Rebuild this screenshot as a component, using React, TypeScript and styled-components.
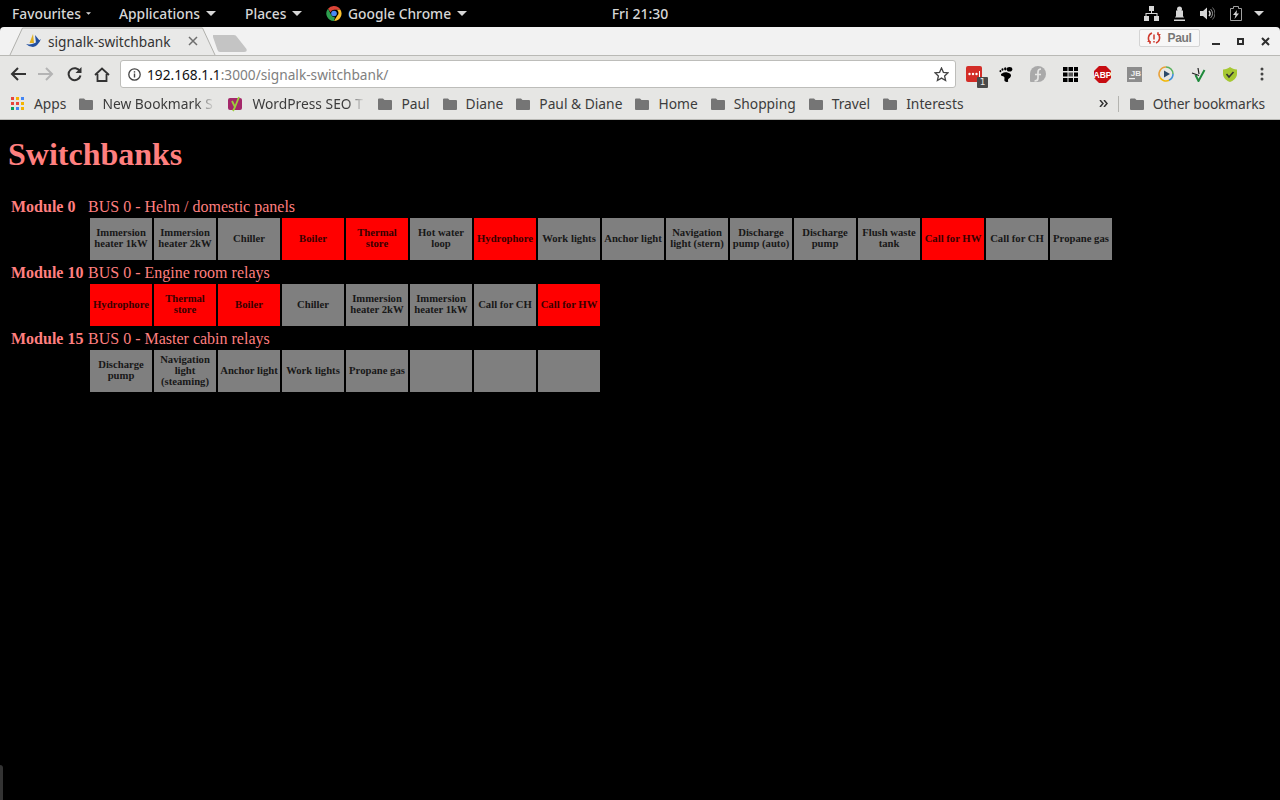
import styled, { createGlobalStyle } from 'styled-components';
import { ReactNode } from 'react';

const GlobalStyle = createGlobalStyle`
    html, body {
        margin: 0;
        padding: 0;
        height: 100%;
        background: #000;
    }
`;

const Screen = styled.div`
    position: relative;
    width: 1280px;
    height: 800px;
    overflow: hidden;
    background: #000;
    display: flex;
    flex-direction: column;
`;

/* gnome top bar */
const TopBar = styled.div`
    height: 27px;
    flex: none;
    display: grid;
    grid-template-columns: 1fr auto 1fr;
    align-items: center;
    background: #000;
    color: #d6d6d6;
    font: 500 13.8px "Noto Sans", sans-serif;
`;

const TopLeft = styled.div`
    display: flex;
    align-items: center;
    padding-left: 12px;
`;

const TopItem = styled.span<{ $w: number; $gap?: number }>`
    display: flex;
    align-items: center;
    gap: ${p => p.$gap ?? 6}px;
    width: ${p => p.$w}px;
    white-space: nowrap;
`;

const Clock = styled.span`
    font-size: 14px;
`;

const TopRight = styled.div`
    display: flex;
    align-items: center;
    justify-content: flex-end;
    gap: 15px;
    padding-right: 16px;
`;

const TrayCaret = styled.span`
    display: flex;
    margin-left: -3px;
`;

const Caret = ({ small }: { small?: boolean }) => (
    <svg width={small ? 5 : 10} height={small ? 3 : 5} viewBox="0 0 10 5">
        <path d="M0 0h10L5 5z" fill="#d6d6d6" />
    </svg>
);

const ChromeLogo = () => (
    <svg width="16" height="15" viewBox="0 0 16 15">
        <g transform="translate(0.5 0)">
            <path d="M7.5 0a7.5 7.5 0 0 1 6.5 3.750H7.500a3.750 3.750 0 0 0-3.500 2.600L1.500 2.800A7.500 7.500 0 0 1 7.500 0z" fill="#db4437" />
            <path d="M14 3.750a7.500 7.500 0 0 1-6.500 11.250l3.200-5.250a3.750 3.750 0 0 0-.4-6z" fill="#fbc02d" />
            <path d="M1.500 2.800l3.100 6a3.750 3.750 0 0 0 3.800 2.400L7.500 15A7.500 7.500 0 0 1 1.500 2.800z" fill="#2e9e4f" />
            <circle cx="7.500" cy="7.500" r="2.800" fill="#4a8af4" />
        </g>
    </svg>
);

const NetworkIcon = () => (
    <svg width="15" height="15" viewBox="0 0 15 15" fill="#d6d6d6">
        <rect x="5" y="0" width="5" height="5" />
        <rect x="0" y="10" width="5" height="5" />
        <rect x="10" y="10" width="5" height="5" />
        <path d="M7 5h1v2h5.500v3h-1V8h-10v2h-1V7H7z" />
    </svg>
);

const LockIcon = () => (
    <svg width="11" height="15" viewBox="0 0 11 15" fill="#d6d6d6">
        <circle cx="5.500" cy="3" r="2.500" />
        <path d="M2 4.500h7V10l1 1.500H1L2 10z" />
        <rect x="0" y="13.500" width="11" height="1.500" />
    </svg>
);

const VolumeIcon = () => (
    <svg width="15" height="15" viewBox="0 0 15 15" fill="none" stroke="#d6d6d6">
        <path d="M0 5h3l4-3.500v12L3 10H0z" fill="#d6d6d6" stroke="none" />
        <path d="M9 5a3.500 3.500 0 0 1 0 5" strokeWidth="1.500" />
        <path d="M10.500 3a6 6 0 0 1 0 9" opacity=".7" />
        <path d="M12.500 1.500a8.500 8.500 0 0 1 0 12" opacity=".5" />
    </svg>
);

const BatteryIcon = () => (
    <svg width="12" height="15" viewBox="0 0 12 15">
        <path d="M3.500.5h5v2h3v12H.5v-12h3z" fill="none" stroke="#a0a0a0" />
        <path d="M7 4L3 9h2.500L4.500 13 9 7.500H6.500z" fill="#d6d6d6" />
    </svg>
);

/* window frame */
const TabStrip = styled.div`
    position: relative;
    height: 28px;
    flex: none;
    display: flex;
    align-items: center;
    background: #f2f2f2;
    border-radius: 4px 4px 0 0;
    border-bottom: 1px solid #b9b9b5;
`;

const TabShape = styled.svg`
    position: absolute;
    left: 8px;
    top: 0;
`;

const ActiveTab = styled.div`
    position: relative;
    display: flex;
    align-items: center;
    width: 172px;
    margin-left: 26px;
    font: 13.7px "Noto Sans", sans-serif;
    color: #333;
`;

const TabTitle = styled.span`
    margin-left: 7px;
    flex: 1;
    white-space: nowrap;
`;

const ProfileChip = styled.div`
    position: absolute;
    left: 1139px;
    top: 2px;
    width: 59px;
    height: 16px;
    display: flex;
    align-items: center;
    justify-content: center;
    gap: 6px;
    border: 1px solid #d4d4d4;
    border-radius: 2px;
    background: #f7f7f7;
    color: #777;
    font: bold 12px "Liberation Sans", sans-serif;
    letter-spacing: -0.3px;
`;

const WindowControls = styled.div`
    position: absolute;
    left: 1203px;
    top: 5px;
    display: flex;
`;

const WindowButton = styled.span`
    width: 25px;
    height: 18px;
    display: flex;
    align-items: center;
    justify-content: center;
`;

const Toolbar = styled.div`
    height: 36px;
    flex: none;
    display: flex;
    align-items: center;
    background: #e6e6e4;
    padding-left: 4px;
    box-sizing: border-box;
`;

const NavButton = styled.span`
    flex: none;
    width: 28px;
    height: 28px;
    display: flex;
    align-items: center;
    justify-content: center;
`;

const AddressBar = styled.div`
    flex: none;
    width: 836px;
    height: 28px;
    margin-left: 4px;
    box-sizing: border-box;
    display: flex;
    align-items: center;
    padding: 0 6px 0 7px;
    background: #fff;
    border: 1px solid #bdbdba;
    border-radius: 3px;
    font: 13.7px "Noto Sans", sans-serif;
    color: #111;
`;

const Url = styled.span`
    flex: 1;
    margin-left: 6px;
    white-space: nowrap;
`;

const UrlRest = styled.span`
    color: #808080;
`;

const Extensions = styled.div`
    display: flex;
    align-items: center;
    margin-left: 2px;
`;

const ExtSlot = styled.span`
    position: relative;
    flex: none;
    width: 32px;
    height: 24px;
    display: flex;
    align-items: center;
    justify-content: center;
`;

const ExtBadge = styled.span`
    position: absolute;
    left: 19px;
    top: 15px;
    width: 11px;
    height: 11px;
    background: #4a4a4a;
    color: #e8e8e8;
    border-radius: 1px;
    font: 9px/11px "DejaVu Sans", sans-serif;
    text-align: center;
`;

const BookmarkBar = styled.div`
    height: 28px;
    flex: none;
    box-sizing: border-box;
    display: flex;
    align-items: center;
    gap: 13px;
    padding: 0 0 4px 11px;
    background: #e6e6e4;
    border-bottom: 1px solid #b9b9b5;
    font: 13.8px "Noto Sans", sans-serif;
    color: #3c3c3c;
`;

const Bookmark = styled.span<{ $gap?: number }>`
    display: flex;
    align-items: center;
    flex: none;
    gap: ${p => p.$gap ?? 9}px;
    white-space: nowrap;
`;

const BookmarkLabel = styled.span<{ $w?: number }>`
    display: block;
    ${p => p.$w && `
        width: ${p.$w}px;
        mask-image: linear-gradient(to right, #000 84%, transparent);
    `}
`;

const BookmarkSpacer = styled.span`
    flex: 1;
`;

const Chevrons = styled.span`
    margin-right: -3px;
    display: flex;
`;

const Separator = styled.span`
    width: 1px;
    height: 16px;
    margin-right: -2px;
    background: #b4b4b0;
`;

const OtherBookmarks = styled(Bookmark)`
    margin-right: 15px;
    letter-spacing: -0.13px;
`;

const Folder = () => (
    <svg width="14" height="12" viewBox="0 0 14 12">
        <path d="M0 1.500A1 1 0 0 1 1 .5h4L6.500 2H13a1 1 0 0 1 1 1v8a1 1 0 0 1-1 1H1a1 1 0 0 1-1-1z" fill="#757575" />
    </svg>
);

const AppsGrid = () => (
    <svg width="13" height="13" viewBox="0 0 13 13">
        {['#e8453c', '#f4b400', '#4285f4', '#e8453c', '#e8453c', '#f4b400', '#0f9d58', '#4285f4', '#f4b400'].map((c, i) => (
            <rect key={i} x={(i % 3) * 5} y={Math.floor(i / 3) * 5} width="3" height="3" fill={c} />
        ))}
    </svg>
);

const YoastIcon = () => (
    <svg width="15" height="16" viewBox="0 0 15 16">
        <rect y="2" width="14" height="12" rx="2" fill="#a4286a" />
        <path d="M4 5l3 6-2 4M11 1L7 11" fill="none" stroke="#9ccf3c" strokeWidth="1.800" />
    </svg>
);

/* page */
const Page = styled.main`
    flex: 1;
    background: #000;
    color: #ff7f7f;
    font-family: "Liberation Serif", serif;
    padding-left: 8px;
`;

const PageTitle = styled.h1`
    margin: 16px 0 25px;
    font-size: 32px;
    line-height: 37px;
    font-weight: bold;
`;

const Modules = styled.div`
    display: flex;
    flex-direction: column;
    gap: 2px;
    padding-left: 3px;
`;

const ModuleHeader = styled.div`
    display: flex;
    height: 18px;
    align-items: center;
    font-size: 16px;
    margin-bottom: 2px;
    white-space: nowrap;
`;

const ModuleName = styled.strong`
    width: 77px;
    flex: none;
`;

const SwitchRow = styled.div`
    display: flex;
    gap: 2px;
    margin-left: 79px;
    margin-bottom: 2px;
`;

const SwitchButton = styled.div<{ $on?: boolean }>`
    width: 62px;
    height: 42px;
    flex: none;
    display: flex;
    align-items: center;
    justify-content: center;
    text-align: center;
    background: ${p => (p.$on ? '#ff0000' : '#7f7f7f')};
    color: ${p => (p.$on ? '#380000' : '#181818')};
    font-size: 10.67px;
    line-height: 11px;
    font-weight: bold;
    padding: 0 1px 2px;
    box-sizing: border-box;
`;

const ResizeEdge = styled.div`
    position: absolute;
    left: 0;
    bottom: 0;
    width: 3px;
    height: 35px;
    background: #333;
    border-radius: 0 3px 0 0;
`;

type Sw = [string, boolean?];

const modules: { name: string; bus: string; switches: Sw[] }[] = [
    {
        name: 'Module 0',
        bus: 'BUS 0 - Helm / domestic panels',
        switches: [
            ['Immersion heater 1kW'], ['Immersion heater 2kW'], ['Chiller'], ['Boiler', true],
            ['Thermal store', true], ['Hot water loop'], ['Hydrophore', true], ['Work lights'],
            ['Anchor light'], ['Navigation light (stern)'], ['Discharge pump (auto)'], ['Discharge pump'],
            ['Flush waste tank'], ['Call for HW', true], ['Call for CH'], ['Propane gas'],
        ],
    },
    {
        name: 'Module 10',
        bus: 'BUS 0 - Engine room relays',
        switches: [
            ['Hydrophore', true], ['Thermal store', true], ['Boiler', true], ['Chiller'],
            ['Immersion heater 2kW'], ['Immersion heater 1kW'], ['Call for CH'], ['Call for HW', true],
        ],
    },
    {
        name: 'Module 15',
        bus: 'BUS 0 - Master cabin relays',
        switches: [
            ['Discharge pump'], ['Navigation light (steaming)'], ['Anchor light'], ['Work lights'],
            ['Propane gas'], [''], [''], [''],
        ],
    },
];

const extensions: { key: string; icon: ReactNode; badge?: string }[] = [
    {
        key: 'lastpass',
        badge: '1',
        icon: (
            <svg width="16" height="16" viewBox="0 0 16 16">
                <rect width="16" height="16" rx="2" fill="#d32d27" />
                <circle cx="3.500" cy="8" r="1.200" fill="#fff" />
                <circle cx="7" cy="8" r="1.200" fill="#fff" />
                <circle cx="10.500" cy="8" r="1.200" fill="#fff" />
                <rect x="13" y="5" width="1" height="6" fill="#fff" />
            </svg>
        ),
    },
    {
        key: 'gnome',
        icon: (
            <svg width="14" height="15" viewBox="0 0 14 15" fill="#000">
                <ellipse cx="10.500" cy="2.300" rx="2.800" ry="2.300" />
                <ellipse cx="6.300" cy="1.800" rx="1.200" ry="1.600" />
                <ellipse cx="3.500" cy="2.500" rx="1" ry="1.300" />
                <ellipse cx="1.400" cy="4.200" rx=".9" ry="1.100" />
                <path d="M3 6.500c2-1.500 4-1.200 6-.8 3 .6 4 3 2 5-1 1-2 1-2 2.300 0 1 .4 1.400 0 1.800s-3 .4-3.500-1 .5-3-.5-4-3-.5-3-1.800 0-1 1-1.500z" />
            </svg>
        ),
    },
    {
        key: 'fedora',
        icon: (
            <svg width="16" height="16" viewBox="0 0 16 16">
                <circle cx="8" cy="8" r="8" fill="#a9a9a9" />
                <path d="M0 8v7a1 1 0 0 0 1 1h7z" fill="#a9a9a9" />
                <path d="M4.500 15c2.500 0 3.500-1 3.500-3V6c0-2 1-3 3-3M5 8.500h6" fill="none" stroke="#e6e6e4" strokeWidth="1.700" />
            </svg>
        ),
    },
    {
        key: 'grid',
        icon: (
            <svg width="15" height="15" viewBox="0 0 15 15">
                {[0, 1, 2, 3, 4, 5, 6, 7, 8].map(i => (
                    <rect key={i} x={(i % 3) * 5.5} y={Math.floor(i / 3) * 5.5} width="4.500" height="4" fill={i === 4 ? '#555' : '#000'} />
                ))}
            </svg>
        ),
    },
    {
        key: 'abp',
        icon: (
            <svg width="17" height="17" viewBox="0 0 17 17">
                <path d="M5 0h7l5 5v7l-5 5H5l-5-5V5z" fill="#c70d12" />
                <text x="8.500" y="11.500" textAnchor="middle" fontFamily="Liberation Sans" fontWeight="bold" fontSize="8.500" fill="#fff">ABP</text>
            </svg>
        ),
    },
    {
        key: 'jb',
        icon: (
            <svg width="15" height="15" viewBox="0 0 15 15">
                <rect width="15" height="15" fill="#8c8c8c" />
                <text x="14" y="8.500" textAnchor="end" fontFamily="Liberation Sans" fontWeight="bold" fontSize="8" fill="#eee">JB</text>
                <rect x="2" y="11" width="6" height="1.200" fill="#eee" />
            </svg>
        ),
    },
    {
        key: 'play',
        icon: (
            <svg width="16" height="16" viewBox="0 0 16 16" fill="none" strokeWidth="1.600">
                <path d="M8 1a7 7 0 0 1 7 7" stroke="#5bb25f" />
                <path d="M15 8a7 7 0 0 1-4 6.300" stroke="#3f8fd8" />
                <path d="M11 14.300A7 7 0 0 1 2 11.500" stroke="#f2b705" />
                <path d="M2 11.500A7 7 0 0 1 8 1" stroke="#e9a13b" />
                <path d="M6 4.500l6 3.500-6 3.500z" fill="#2c4a6b" stroke="none" />
            </svg>
        ),
    },
    {
        key: 'check',
        icon: (
            <svg width="15" height="15" viewBox="0 0 15 15" fill="none">
                <path d="M4.500 8l3 6 6-11" stroke="#1f8a3b" strokeWidth="2" />
                <path d="M1 6l7 2.500M7 1l1 6" stroke="#222" strokeWidth="1.200" />
            </svg>
        ),
    },
    {
        key: 'shield',
        icon: (
            <svg width="16" height="15" viewBox="0 0 16 15">
                <path d="M1 2.500C4 2.500 6 1.500 8 0c2 1.500 4 2.500 7 2.500V7c0 4-4 7-7 8-3-1-7-4-7-8z" fill="#a6c832" />
                <path d="M4.500 7l2.500 3 4.500-5" fill="none" stroke="#333" strokeWidth="1.600" />
            </svg>
        ),
    },
    {
        key: 'menu',
        icon: (
            <svg width="4" height="14" viewBox="0 0 4 14" fill="#444">
                <circle cx="2" cy="2" r="1.500" />
                <circle cx="2" cy="7" r="1.500" />
                <circle cx="2" cy="12" r="1.500" />
            </svg>
        ),
    },
];

const plainBookmarks = ['Paul', 'Diane', 'Paul & Diane', 'Home', 'Shopping', 'Travel', 'Interests'];

export default function App() {
    return (
        <Screen>
            <GlobalStyle />
            <TopBar>
                <TopLeft>
                    <TopItem $w={107} $gap={5}>Favourites <Caret small /></TopItem>
                    <TopItem $w={126}>Applications <Caret /></TopItem>
                    <TopItem $w={81}>Places <Caret /></TopItem>
                    <TopItem $w={150}><ChromeLogo />Google Chrome <Caret /></TopItem>
                </TopLeft>
                <Clock>Fri 21:30</Clock>
                <TopRight>
                    <NetworkIcon />
                    <LockIcon />
                    <VolumeIcon />
                    <BatteryIcon />
                    <TrayCaret><Caret /></TrayCaret>
                </TopRight>
            </TopBar>

            <TabStrip>
                <TabShape width="245" height="28" viewBox="0 0 245 28">
                    <path d="M2 28L14.500 1H194.500L207 28" fill="#e9e9e8" stroke="#b0b0ac" />
                    <path d="M205 8H226Q228 8 229 10L238.500 22Q239.500 25 236 25H212Q210 25 209.500 23L205 10Z" fill="#c4c4c4" />
                </TabShape>
                <ActiveTab>
                    <svg width="15" height="14" viewBox="0 0 15 14">
                        <path d="M7 0L3.500 9H8z" fill="#e0b020" />
                        <path d="M9 1l1 8 4-2z" fill="#2350a0" />
                        <path d="M0 10q7 2 15-5-3 7-8 8-4 0-7-3z" fill="#2350a0" />
                    </svg>
                    <TabTitle>signalk-switchbank</TabTitle>
                    <svg width="10" height="10" viewBox="0 0 10 10">
                        <path d="M1 1l8 8M9 1l-8 8" stroke="#6e6e6e" strokeWidth="1.500" />
                    </svg>
                </ActiveTab>
                <ProfileChip>
                    <svg width="14" height="14" viewBox="0 0 14 14" fill="none" stroke="#cf3a2e" strokeWidth="1.500">
                        <path d="M5 2A5.500 5.500 0 0 0 3.500 11.500M9 12a5.500 5.500 0 0 0 1.500-9.500" />
                        <path d="M3 13V10.500H.5M11 1v2.500h2.500" strokeWidth="1.200" />
                        <path d="M7 3.500v5M7 10v1.500" />
                    </svg>
                    Paul
                </ProfileChip>
                <WindowControls>
                    <WindowButton>
                        <svg width="8" height="8" viewBox="0 0 8 8"><rect y="6" width="8" height="2" fill="#2e2e2e" /></svg>
                    </WindowButton>
                    <WindowButton>
                        <svg width="7" height="7" viewBox="0 0 7 7"><rect x="1" y="1" width="5" height="5" fill="none" stroke="#2e2e2e" strokeWidth="2" /></svg>
                    </WindowButton>
                    <WindowButton>
                        <svg width="9" height="9" viewBox="0 0 9 9"><path d="M1 1l7 7M8 1L1 8" stroke="#2e2e2e" strokeWidth="2" /></svg>
                    </WindowButton>
                </WindowControls>
            </TabStrip>

            <Toolbar>
                <NavButton>
                    <svg width="16" height="14" viewBox="0 0 16 14" fill="none" stroke="#333" strokeWidth="2">
                        <path d="M16 7H2M8 1L2 7l6 6" />
                    </svg>
                </NavButton>
                <NavButton>
                    <svg width="16" height="14" viewBox="0 0 16 14" fill="none" stroke="#b4b4b4" strokeWidth="2">
                        <path d="M0 7h14M8 1l6 6-6 6" />
                    </svg>
                </NavButton>
                <NavButton>
                    <svg width="15" height="15" viewBox="0 0 15 15" fill="none" stroke="#333" strokeWidth="2">
                        <path d="M13 4.500A6 6 0 1 0 13.500 8.500" />
                        <path d="M14.500 0v6h-6z" fill="#333" stroke="none" />
                    </svg>
                </NavButton>
                <NavButton>
                    <svg width="16" height="15" viewBox="0 0 16 15" fill="none" stroke="#333" strokeWidth="1.800">
                        <path d="M1 8l7-6.500L15 8M3.500 7v7h9V7" />
                    </svg>
                </NavButton>
                <AddressBar>
                    <svg width="13" height="13" viewBox="0 0 13 13">
                        <circle cx="6.500" cy="6.500" r="5.700" fill="none" stroke="#444" strokeWidth="1.300" />
                        <rect x="5.800" y="5.500" width="1.400" height="4" fill="#444" />
                        <rect x="5.800" y="3.200" width="1.400" height="1.400" fill="#444" />
                    </svg>
                    <Url>192.168.1.1<UrlRest>:3000/signalk-switchbank/</UrlRest></Url>
                    <svg width="15" height="15" viewBox="0 0 15 15">
                        <path d="M7.500 1l1.900 4.300 4.600.5-3.400 3.100 1 4.600-4.100-2.400-4.100 2.400 1-4.600L1 5.800l4.600-.5z" fill="none" stroke="#444" strokeWidth="1.300" />
                    </svg>
                </AddressBar>
                <Extensions>
                    {extensions.map(ext => (
                        <ExtSlot key={ext.key}>
                            {ext.icon}
                            {ext.badge && <ExtBadge>{ext.badge}</ExtBadge>}
                        </ExtSlot>
                    ))}
                </Extensions>
            </Toolbar>

            <BookmarkBar>
                <Bookmark $gap={10}><AppsGrid /><BookmarkLabel>Apps</BookmarkLabel></Bookmark>
                <Bookmark><Folder /><BookmarkLabel $w={113}>New Bookmark S</BookmarkLabel></Bookmark>
                <Bookmark><YoastIcon /><BookmarkLabel $w={113}>WordPress SEO T</BookmarkLabel></Bookmark>
                {plainBookmarks.map(label => (
                    <Bookmark key={label}><Folder /><BookmarkLabel>{label}</BookmarkLabel></Bookmark>
                ))}
                <BookmarkSpacer />
                <Chevrons>
                    <svg width="9" height="7" viewBox="0 0 9 7" fill="none" stroke="#333" strokeWidth="1.500">
                        <path d="M1 0l3 3.500L1 7M5 0l3 3.500L5 7" />
                    </svg>
                </Chevrons>
                <Separator />
                <OtherBookmarks><Folder /><BookmarkLabel>Other bookmarks</BookmarkLabel></OtherBookmarks>
            </BookmarkBar>

            <Page>
                <PageTitle>Switchbanks</PageTitle>
                <Modules>
                    {modules.map(mod => (
                        <div key={mod.name}>
                            <ModuleHeader>
                                <ModuleName>{mod.name}</ModuleName>
                                {mod.bus}
                            </ModuleHeader>
                            <SwitchRow>
                                {mod.switches.map((sw, i) => (
                                    <SwitchButton key={i} $on={sw[1]}>{sw[0]}</SwitchButton>
                                ))}
                            </SwitchRow>
                        </div>
                    ))}
                </Modules>
            </Page>
            <ResizeEdge />
        </Screen>
    );
}
